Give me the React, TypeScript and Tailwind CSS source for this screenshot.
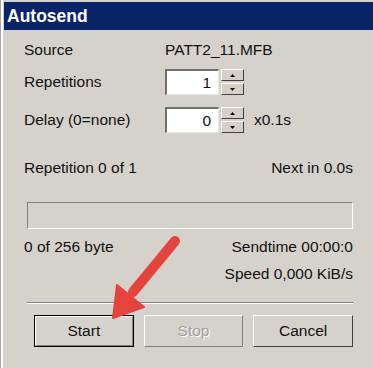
import React from "react";

const sunken = "border-t border-l border-t-[#808080] border-l-[#808080] border-b border-r border-b-white border-r-white";

function Spin() {
  return (
    <div className="flex flex-col gap-[2px] ml-[2px]">
      <div className="w-[23px] h-[12px] bg-[#d4d0c8] border border-t-white border-l-white border-b-[#404040] border-r-[#404040] flex items-center justify-center">
        <svg width="5" height="3" viewBox="0 0 5 3"><path d="M2.5 0 L5 3 L0 3 Z" fill="#000" /></svg>
      </div>
      <div className="w-[23px] h-[12px] bg-[#d4d0c8] border border-t-white border-l-white border-b-[#404040] border-r-[#404040] flex items-center justify-center">
        <svg width="5" height="3" viewBox="0 0 5 3"><path d="M0 0 L5 0 L2.5 3 Z" fill="#000" /></svg>
      </div>
    </div>
  );
}

function NumBox({ v }: { v: string }) {
  return (
    <div className="w-[54px] h-[26px] bg-white border-t-2 border-l-2 border-t-[#707070] border-l-[#707070] border-b border-r border-b-[#e8e8e8] border-r-[#e8e8e8] flex items-center justify-end pr-[7px]">
      {v}
    </div>
  );
}

export default function App() {
  return (
    <div
      className="relative w-[373px] h-[368px] bg-[#d5d2cb] overflow-hidden border-l border-l-[#a8a8a8] text-[15.5px] text-[#111]"
      style={{ fontFamily: '"Liberation Sans", Arial, sans-serif' }}
    >
      <div className="h-full border-l-2 border-l-white pt-[2px] flex flex-col">
        <div className="ml-[1px] h-[28px] bg-[#0a246a] text-white font-bold text-[17.5px] flex items-center pl-[3px] pt-[1px]">
          Autosend
        </div>
        <div className="pl-[21px] pr-[20px] flex flex-col">
          <div className="mt-[10px] h-[20px] flex items-center">
            <span className="w-[141px]">Source</span>
            <span>PATT2_11.MFB</span>
          </div>
          <div className="mt-[9px] h-[26px] flex items-center">
            <span className="w-[141px]">Repetitions</span>
            <NumBox v="1" />
            <Spin />
          </div>
          <div className="mt-[12px] h-[26px] flex items-center">
            <span className="w-[141px]">Delay (0=none)</span>
            <NumBox v="0" />
            <Spin />
            <span className="ml-[10px]">x0.1s</span>
          </div>
          <div className="mt-[25px] h-[20px] flex items-center justify-between">
            <span>Repetition 0 of 1</span>
            <span>Next in 0.0s</span>
          </div>
          <div className={`mt-[24px] h-[27px] ml-[3px] ${sunken}`} />
          <div className="mt-[8px] h-[20px] flex items-center justify-between">
            <span>0 of 256 byte</span>
            <span>Sendtime 00:00:0</span>
          </div>
          <div className="mt-[7px] h-[20px] flex items-center justify-end">
            <span>Speed 0,000 KiB/s</span>
          </div>
          <div className="mt-[18px] ml-[3px] border-t border-t-[#808080] border-b border-b-white" />
          <div className="mt-[11px] pl-[10px] flex gap-[10px]">
            <div className="w-[100px] h-[32px] border border-black">
              <div className="w-full h-full border border-t-white border-l-white border-b-[#808080] border-r-[#808080] flex items-center justify-center">
                Start
              </div>
            </div>
            <div className="w-[100px] h-[32px] border border-t-white border-l-white border-b-[#808080] border-r-[#808080] flex items-center justify-center text-[#a0a0a0]" style={{ textShadow: "1px 1px 0 #fff" }}>
              Stop
            </div>
            <div className="w-[100px] h-[32px] border border-t-white border-l-white border-b-[#404040] border-r-[#404040] flex items-center justify-center">
              Cancel
            </div>
          </div>
        </div>
      </div>
      <svg className="absolute left-0 top-0 pointer-events-none" width="373" height="368" viewBox="0 0 373 368">
        <line x1="174" y1="241" x2="132" y2="292" stroke="#e5433b" strokeWidth="10" strokeLinecap="round" />
        <polygon points="112,318 116,285 143,307" fill="#e5433b" stroke="#e5433b" strokeWidth="2" strokeLinejoin="round" />
      </svg>
    </div>
  );
}
